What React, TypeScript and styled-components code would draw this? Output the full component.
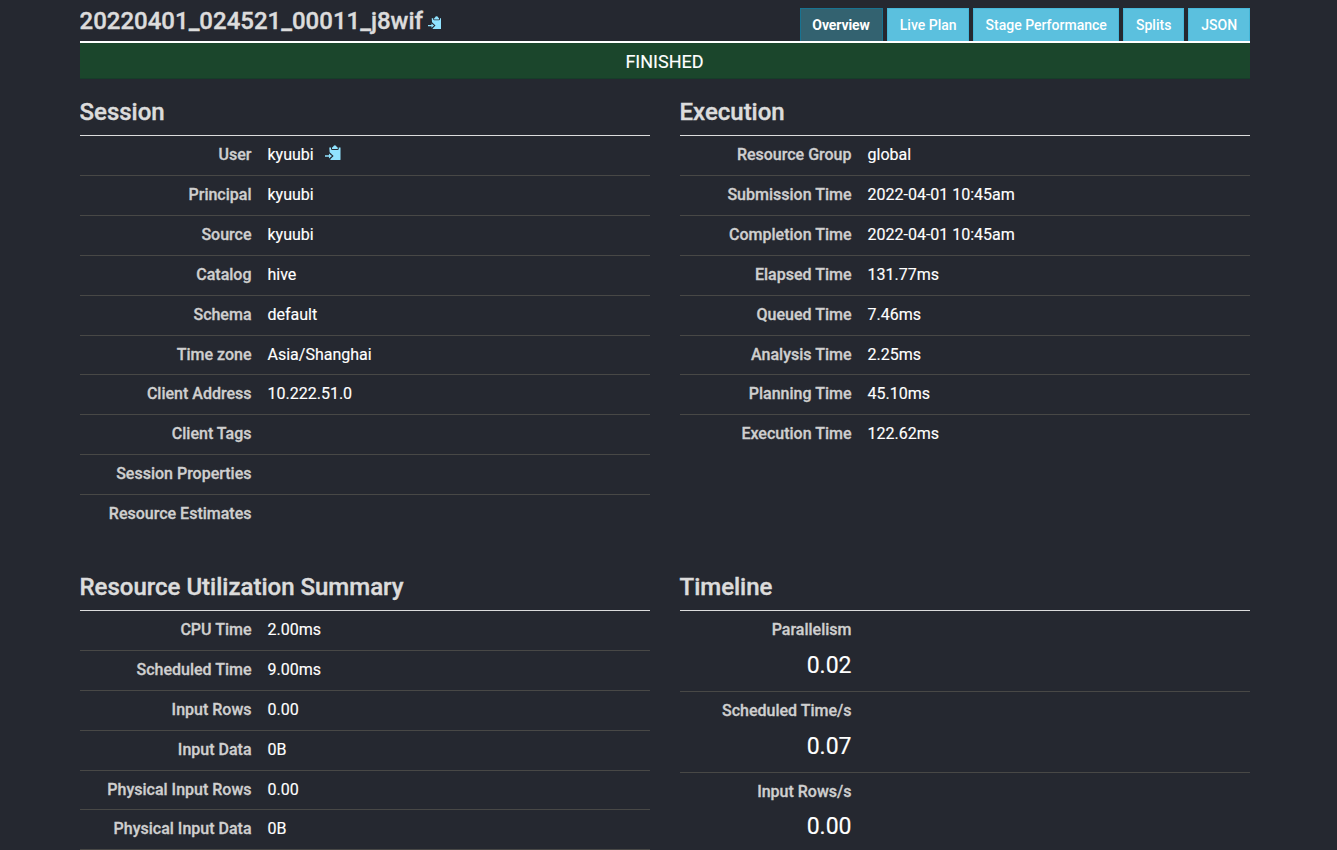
import React from 'react';
import styled, { createGlobalStyle } from 'styled-components';

const GlobalStyle = createGlobalStyle`
  *, *::before, *::after { box-sizing: border-box; }
  html, body { margin: 0; height: 850px; overflow: hidden; }
  body {
    background: #252830;
    color: #fff;
    font: 400 16px/1.42857143 Roboto, sans-serif;
    -webkit-text-stroke: 0.15px currentColor;
  }
`;

const Container = styled.main`
  width: 1170px;
  height: 850px;
  margin-left: 79.5px;
  overflow: hidden;
`;

const Header = styled.header`
  display: flex;
  justify-content: space-between;
  height: 43px;
  padding-top: 8px;
  border-bottom: 2px solid #fff;
`;

const Title = styled.h1`
  margin: 0;
  font-size: 24px;
  font-weight: 500;
  line-height: 26px;
  color: #dcdcdc;
  -webkit-text-stroke-width: 0.4px;
`;

const Tabs = styled.nav`
  display: flex;
  gap: 4px;
`;

const Tab = styled.a<{ $active?: boolean; $width: number }>`
  width: ${(p) => p.$width}px;
  height: 33px;
  padding-left: ${(p) => (p.$active ? 0 : 1.4)}px;
  border: 1px solid ${(p) => (p.$active ? '#187391' : '#46b8da')};
  border-bottom: 0;
  background: ${(p) => (p.$active ? '#336270' : '#5bc0de')};
  color: #fff;
  font-size: 14px;
  font-weight: ${(p) => (p.$active ? 700 : 500)};
  letter-spacing: ${(p) => (p.$active ? '-0.1px' : 'normal')};
  line-height: 33px;
  text-align: center;
  white-space: nowrap;
  -webkit-text-stroke-width: 0;
`;

const Status = styled.div`
  height: 36px;
  background: #1b462c;
  border-bottom: 1px solid #173d2a;
  font-size: 18px;
  line-height: 37px;
  text-align: center;
`;

const Columns = styled.div<{ $top: number }>`
  display: grid;
  grid-template-columns: 570px 570px;
  column-gap: 30px;
  margin-top: ${(p) => p.$top}px;
`;

const Panel = styled.section`
  min-width: 0;
`;

const Heading = styled.h3`
  height: 40px;
  margin: 0 0 -0.7px;
  border-bottom: 1px solid #dcdcdc;
  color: #dcdcdc;
  font-size: 24px;
  font-weight: 500;
  line-height: 33px;
  -webkit-text-stroke-width: 0.4px;
`;

const Row = styled.div`
  display: grid;
  grid-template-columns: 180px 1fr;
  height: 39.857px;
  border-top: 1px solid transparent;
  & + & { border-top-color: #484846; }
`;

const Label = styled.div`
  padding: 8px;
  color: #cfcfcf;
  font-weight: 500;
  text-align: right;
  white-space: nowrap;
  -webkit-text-stroke-width: 0.3px;
`;

const Value = styled.div`
  padding: 8px;
`;

const Metric = styled.div`
  width: 180px;
  padding: 8px;
  text-align: right;
`;

const MetricRow = styled.div`
  height: 80.857px;
  border-top: 1px solid transparent;
  & + & { border-top-color: #484846; }
`;

const MetricName = styled.div`
  color: #cfcfcf;
  font-weight: 500;
  line-height: 22.857px;
  -webkit-text-stroke-width: 0.3px;
`;

const MetricValue = styled.div`
  margin-top: 6.71px;
  font-size: 23px;
  line-height: 34px;
`;

const CopyIcon = styled.svg<{ $size: number; $left: number; $drop: number }>`
  width: ${(p) => p.$size}px;
  height: ${(p) => p.$size}px;
  margin-left: ${(p) => p.$left}px;
  vertical-align: ${(p) => -p.$drop}px;
  fill: #91e3ff;
`;

const Clipboard = ({ size, left, drop }: { size: number; left: number; drop: number }) => (
  <CopyIcon viewBox="0 0 16 16" $size={size} $left={left} $drop={drop} aria-label="Copy">
    <path d="M7.2 3.5Q7.2 2.2 8.4 1.9Q8.8 0.2 10.2 0.2Q11.6 0.2 12 1.9Q13.2 2.2 13.2 3.5V4.1H7.2Z" />
    <path d="M4.4 2.6H6.2V3.8Q6.2 5.1 7.5 5.1H12.9Q14.2 5.1 14.2 3.8V2.6H16V14.9Q16 15.6 15.3 15.6H5.8L5.4 14.8L8.9 11.4 4.8 7.4Z" />
    <path d="M0 10.7H4.1V8.8L7.2 11.4 4.1 14V12.1H0Z" />
  </CopyIcon>
);

type Entry = [string, string];

const session: Entry[] = [
  ['User', 'kyuubi'], ['Principal', 'kyuubi'], ['Source', 'kyuubi'],
  ['Catalog', 'hive'], ['Schema', 'default'], ['Time zone', 'Asia/Shanghai'],
  ['Client Address', '10.222.51.0'], ['Client Tags', ''],
  ['Session Properties', ''], ['Resource Estimates', ''],
];

const execution: Entry[] = [
  ['Resource Group', 'global'], ['Submission Time', '2022-04-01 10:45am'],
  ['Completion Time', '2022-04-01 10:45am'], ['Elapsed Time', '131.77ms'],
  ['Queued Time', '7.46ms'], ['Analysis Time', '2.25ms'],
  ['Planning Time', '45.10ms'], ['Execution Time', '122.62ms'],
];

const resources: Entry[] = [
  ['CPU Time', '2.00ms'], ['Scheduled Time', '9.00ms'], ['Input Rows', '0.00'],
  ['Input Data', '0B'], ['Physical Input Rows', '0.00'], ['Physical Input Data', '0B'],
  ['', ''],
];

const timeline: Entry[] = [
  ['Parallelism', '0.02'], ['Scheduled Time/s', '0.07'], ['Input Rows/s', '0.00'],
];

const tabs: [string, number][] = [
  ['Overview', 83], ['Live Plan', 82], ['Stage Performance', 146], ['Splits', 61], ['JSON', 62],
];

const Table = ({ title, rows }: { title: string; rows: Entry[] }) => (
  <Panel>
    <Heading>{title}</Heading>
    {rows.map(([label, value]) => (
      <Row key={label}>
        <Label>{label}</Label>
        <Value>
          {value}
          {label === 'User' && <Clipboard size={15.5} left={11.7} drop={0.6} />}
        </Value>
      </Row>
    ))}
  </Panel>
);

export default function App() {
  return (
    <>
      <GlobalStyle />
      <Container>
        <Header>
          <Title>
            20220401_024521_00011_j8wif
            <Clipboard size={13.5} left={5} drop={0} />
          </Title>
          <Tabs>
            {tabs.map(([name, width], i) => (
              <Tab key={name} $active={i === 0} $width={width}>{name}</Tab>
            ))}
          </Tabs>
        </Header>
        <Status>FINISHED</Status>
        <Columns $top={17}>
          <Table title="Session" rows={session} />
          <Table title="Execution" rows={execution} />
        </Columns>
        <Columns $top={37.1}>
          <Table title="Resource Utilization Summary" rows={resources} />
          <Panel>
            <Heading>Timeline</Heading>
            {timeline.map(([name, value]) => (
              <MetricRow key={name}>
                <Metric>
                  <MetricName>{name}</MetricName>
                  <MetricValue>{value}</MetricValue>
                </Metric>
              </MetricRow>
            ))}
          </Panel>
        </Columns>
      </Container>
    </>
  );
}
